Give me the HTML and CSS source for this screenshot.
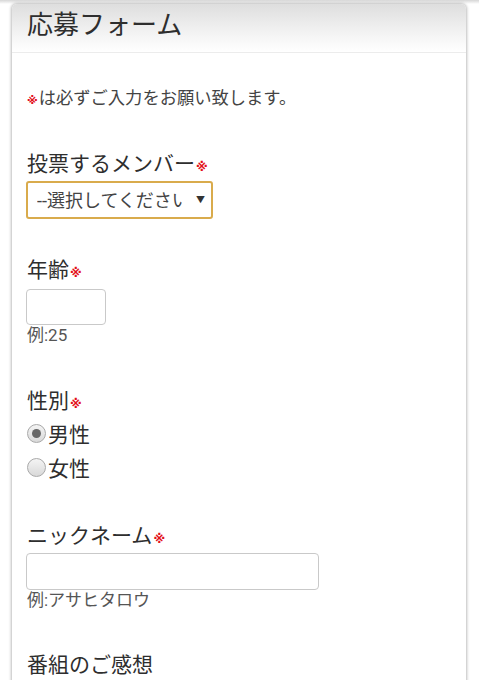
FILE: index.html
```html
<!DOCTYPE html>
<html lang="ja">
<head>
<meta charset="utf-8">
<title>応募フォーム</title>
<link rel="stylesheet" href="styles.css">
</head>
<body>
<div class="page">
  <div class="card">
    <div class="card-head"><h1 class="title">応募フォーム</h1></div>
    <div class="card-body">
      <p class="notice"><span class="req">※</span>は必ずご入力をお願い致します。</p>

      <div class="field f-member">
        <div class="label">投票するメンバー<span class="req">※</span></div>
        <div class="select-wrap">
          <select class="select"><option>--選択してください</option></select>
          <span class="arrow">▼</span>
        </div>
      </div>

      <div class="field f-age">
        <div class="label">年齢<span class="req">※</span></div>
        <input class="input input-age" type="text">
        <div class="hint">例:25</div>
      </div>

      <div class="field f-sex">
        <div class="label">性別<span class="req">※</span></div>
        <label class="radio-row"><span class="radio checked"></span>男性</label>
        <label class="radio-row"><span class="radio"></span>女性</label>
      </div>

      <div class="field f-nick">
        <div class="label">ニックネーム<span class="req">※</span></div>
        <input class="input input-nick" type="text">
        <div class="hint">例:アサヒタロウ</div>
      </div>

      <div class="field f-impr">
        <div class="label">番組のご感想</div>
      </div>
    </div>
  </div>
</div>
</body>
</html>
```

FILE: styles.css
```css
html, body {
  margin: 0;
  padding: 0;
  background: #fff;
}
body {
  font-family: Roboto, "Noto Sans CJK JP", sans-serif;
  color: #333;
  overflow: hidden;
}
.page {
  padding: 4px 13px 0 12px;
  height: 676px;
  background: linear-gradient(#d6d6d6, #fff 4px);
}
.card {
  background: #fff;
  border-radius: 5px 5px 0 0;
  box-shadow: 0 0 3px 1px #bdbdbd;
  height: 700px;
}
.card-head {
  height: 48px;
  border-bottom: 1px solid #ececec;
  border-radius: 5px 5px 0 0;
  background: linear-gradient(#dedede, #f6f6f6 70%, #fff);
  padding-left: 15px;
  display: flex;
  align-items: center;
}
.title {
  margin: 0;
  font-size: 26px;
  font-weight: normal;
  color: #2e2e2e;
  line-height: 1;
  padding-bottom: 6px;
}
.card-body {
  padding: 0 14px 0 15px;
}
.notice {
  margin: 33px 0 0;
  font-size: 17.3px;
  line-height: 24px;
  color: #444;
}
.req {
  color: #e3101a;
  font-family: "DejaVu Sans", sans-serif;
  font-size: 11px;
  font-weight: bold;
  line-height: 0;
  margin-right: 1px;
}
.label {
  font-size: 21px;
  line-height: 28px;
  color: #2e2e2e;
}
.label .req {
  margin-left: 1px;
  font-size: 12px;
}
.field { display: flex; flex-direction: column; align-items: flex-start; }
.f-member { margin-top: 40px; }
.f-age { margin-top: 37px; }
.f-sex { margin-top: 42px; }
.f-nick { margin-top: 38px; }
.f-impr { margin-top: 41px; }

.select-wrap {
  position: relative;
  margin-top: 3px;
  margin-left: -1px;
}
.select {
  appearance: none;
  -webkit-appearance: none;
  width: 187px;
  height: 38px;
  box-sizing: border-box;
  border: 2px solid #d9ab4c;
  border-radius: 3px;
  background: #fff;
  font-family: inherit;
  font-size: 18px;
  color: #444;
  padding: 0 29px 0 9px;
  outline: none;
}
.arrow {
  position: absolute;
  right: 8px;
  top: 12px;
  font-size: 9px;
  color: #333;
  line-height: 14px;
}
.input {
  box-sizing: border-box;
  border: 1px solid #c9c9c9;
  border-radius: 4px;
  background: #fff;
  margin: 0 0 0 -1px;
  padding: 0;
  outline: none;
}
.input-age {
  width: 80px;
  height: 36px;
  margin-top: 5px;
}
.input-nick {
  width: 293px;
  height: 37px;
  margin-top: 3px;
}
.hint {
  font-size: 17px;
  line-height: 20px;
  color: #555;
}
.radio-row {
  display: flex;
  align-items: center;
  height: 34px;
  font-size: 21px;
  color: #2e2e2e;
}
.f-sex .radio-row:first-of-type { margin-top: 1px; }
.radio {
  width: 19px;
  height: 19px;
  box-sizing: border-box;
  border-radius: 50%;
  border: 1px solid #a9a9a9;
  background: linear-gradient(#f4f4f4, #d9d9d9);
  margin-right: 2px;
  display: flex;
  align-items: center;
  justify-content: center;
}
.radio.checked::after {
  content: "";
  width: 9px;
  height: 9px;
  border-radius: 50%;
  background: #666;
}
```
